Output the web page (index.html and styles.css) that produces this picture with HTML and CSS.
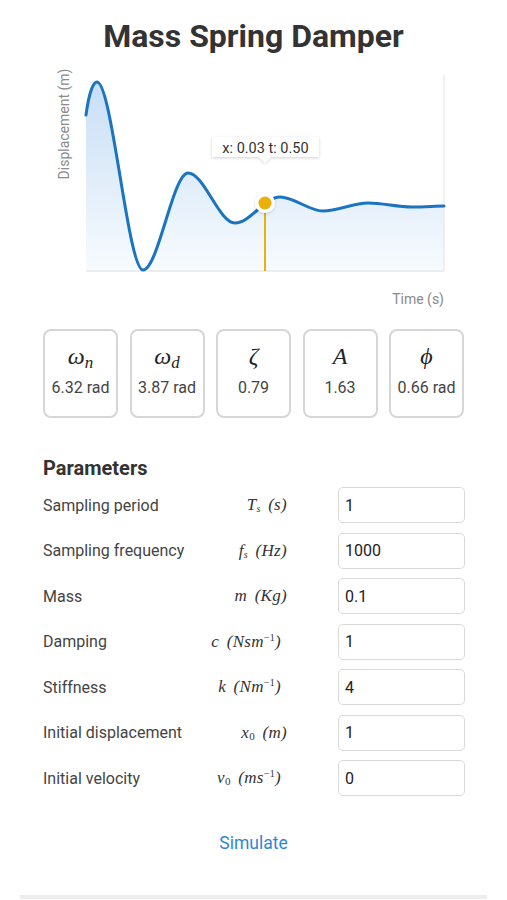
FILE: index.html
```html
<!DOCTYPE html>
<html>
<head>
<meta charset="utf-8">
<link rel="stylesheet" href="styles.css">
</head>
<body>
<h1 class="title">Mass Spring Damper</h1>
<svg class="chart" width="507" height="260" viewBox="0 56 507 260">
  <defs>
    <linearGradient id="fillg" x1="0" y1="0" x2="0" y2="1">
      <stop offset="0" stop-color="#c8def5"/>
      <stop offset="1" stop-color="#f7fbfe"/>
    </linearGradient>
    <filter id="sh" x="-30%" y="-50%" width="160%" height="200%">
      <feDropShadow dx="0" dy="1" stdDeviation="1.5" flood-color="#000" flood-opacity="0.18"/>
    </filter>
  </defs>
  <path d="M86,115 C88,100 92,82 97,82 C112,82 128,270 143,270 C158,270 173,173 188,173 C204,173 219,223 235,223 C250,223 265,197 280,197 C294,197 309,211 323,211 C338,211 353,203 368,203 C383,203 397,207 412,207 C425,207 435,206 444,206 L444,271 L86,271 Z" fill="url(#fillg)"/>
  <line x1="444" y1="75" x2="444" y2="271" stroke="#e3e3e3" stroke-width="1"/>
  <line x1="86" y1="271" x2="444" y2="271" stroke="#dedede" stroke-width="1"/>
  <path d="M86,115 C88,100 92,82 97,82 C112,82 128,270 143,270 C158,270 173,173 188,173 C204,173 219,223 235,223 C250,223 265,197 280,197 C294,197 309,211 323,211 C338,211 353,203 368,203 C383,203 397,207 412,207 C425,207 435,206 444,206" fill="none" stroke="#1b74c2" stroke-width="3" stroke-linecap="round"/>
  <line x1="265" y1="210" x2="265" y2="271" stroke="#e5b40c" stroke-width="2"/>
  <circle cx="265" cy="203" r="10" fill="#fff" filter="url(#sh)"/>
  <circle cx="265" cy="203" r="6.5" fill="#ecb00a"/>
  <g filter="url(#sh)">
    <rect x="212" y="137" width="107" height="20" fill="#fff"/>
    <path d="M259,157 L265,163 L271,157 Z" fill="#fff"/>
  </g>
  <text x="265.5" y="152.5" text-anchor="middle" class="tip">x: 0.03 t: 0.50</text>
  <text transform="translate(69,124) rotate(-90)" text-anchor="middle" class="axis">Displacement (m)</text>
  <text x="444" y="304" text-anchor="end" class="axis">Time (s)</text>
</svg>

<div class="cards">
  <div class="card"><div class="sym">ω<sub>n</sub></div><div class="val">6.32 rad</div></div>
  <div class="card"><div class="sym">ω<sub>d</sub></div><div class="val">3.87 rad</div></div>
  <div class="card"><div class="sym">ζ</div><div class="val">0.79</div></div>
  <div class="card"><div class="sym">A</div><div class="val">1.63</div></div>
  <div class="card"><div class="sym">ϕ</div><div class="val">0.66 rad</div></div>
</div>

<section class="params">
  <h2 class="params-title">Parameters</h2>
  <div class="row"><span class="label">Sampling period</span><span class="math">T<sub class="s">s</sub> (s)</span><input class="field" value="1"></div>
  <div class="row"><span class="label">Sampling frequency</span><span class="math">f<sub class="s">s</sub> (Hz)</span><input class="field" value="1000"></div>
  <div class="row"><span class="label">Mass</span><span class="math">m (Kg)</span><input class="field" value="0.1"></div>
  <div class="row"><span class="label">Damping</span><span class="math with-sup">c (Nsm<sup>−1</sup>)</span><input class="field" value="1"></div>
  <div class="row"><span class="label">Stiffness</span><span class="math with-sup">k (Nm<sup>−1</sup>)</span><input class="field" value="4"></div>
  <div class="row"><span class="label">Initial displacement</span><span class="math">x<sub class="n">0</sub> (m)</span><input class="field" value="1"></div>
  <div class="row"><span class="label">Initial velocity</span><span class="math with-sup">v<sub class="n">0</sub> (ms<sup>−1</sup>)</span><input class="field" value="0"></div>
</section>

<div class="actions"><button class="simulate">Simulate</button></div>
<div class="bottom-bar"></div>
</body>
</html>
```
FILE: styles.css
```css
html, body {
  margin: 0;
  padding: 0;
  background: #fff;
}
body {
  width: 507px;
  font-family: Roboto, "Liberation Sans", sans-serif;
  color: #444;
}
.title {
  margin: 0;
  padding-top: 16px;
  height: 40px;
  line-height: 40px;
  font-size: 32px;
  font-weight: 700;
  text-align: center;
  color: #333;
}
.chart {
  display: block;
}
.tip {
  font-family: Roboto, "Liberation Sans", sans-serif;
  font-size: 14.5px;
  fill: #333;
}
.axis {
  font-family: Roboto, "Liberation Sans", sans-serif;
  font-size: 14px;
  fill: #8a8a8a;
}
.cards {
  display: flex;
  justify-content: center;
  gap: 11.5px;
  margin-top: 13px;
}
.card {
  box-sizing: border-box;
  width: 75px;
  height: 89px;
  border: 2px solid #d6d6d6;
  border-radius: 8px;
  display: flex;
  flex-direction: column;
  align-items: center;
}
.sym {
  margin-top: 10px;
  height: 30px;
  line-height: 30px;
  font-family: "Liberation Serif", "DejaVu Serif", serif;
  font-style: italic;
  font-size: 24px;
  color: #222;
}
.sym sub {
  font-size: 17px;
  vertical-align: -4px;
  line-height: 0;
}
.val {
  margin-top: 7px;
  font-size: 16px;
  line-height: 20px;
  color: #444;
}
.params {
  padding: 0 42px 0 43px;
  margin-top: 38px;
}
.params-title {
  margin: 0 0 6px;
  font-size: 20px;
  line-height: 25px;
  font-weight: 700;
  color: #333;
}
.row {
  display: flex;
  align-items: center;
  height: 36px;
  margin-bottom: 9.5px;
}
.label {
  width: 150px;
  font-size: 16px;
  color: #444;
}
.math {
  box-sizing: border-box;
  width: 94px;
  white-space: nowrap;
  text-align: right;
  font-family: "Liberation Serif", "DejaVu Serif", serif;
  font-style: italic;
  font-size: 17px;
  word-spacing: 3px;
  letter-spacing: 0.3px;
  color: #333;
}
.math.with-sup {
  padding-right: 6px;
}
.math sub.s {
  font-size: 10px;
  vertical-align: -2px;
  line-height: 0;
}
.math sub.n {
  font-style: normal;
  font-size: 11px;
  vertical-align: -2px;
  line-height: 0;
}
.math sup {
  font-style: normal;
  font-size: 10px;
  vertical-align: 6px;
  line-height: 0;
}
.field {
  box-sizing: border-box;
  margin-left: 51px;
  width: 127px;
  height: 36px;
  border: 1.5px solid #d9d9d9;
  border-radius: 5px;
  padding: 0 6px;
  font-family: Roboto, "Liberation Sans", sans-serif;
  font-size: 16px;
  color: #222;
  outline: none;
}
.actions {
  display: flex;
  justify-content: center;
  margin-top: 35px;
}
.simulate {
  border: none;
  background: none;
  padding: 0;
  font-family: Roboto, "Liberation Sans", sans-serif;
  font-size: 17.5px;
  line-height: 24px;
  color: #2f86d6;
}
.bottom-bar {
  margin: 40px 20px 0;
  height: 4px;
  background: #ededed;
}
```
